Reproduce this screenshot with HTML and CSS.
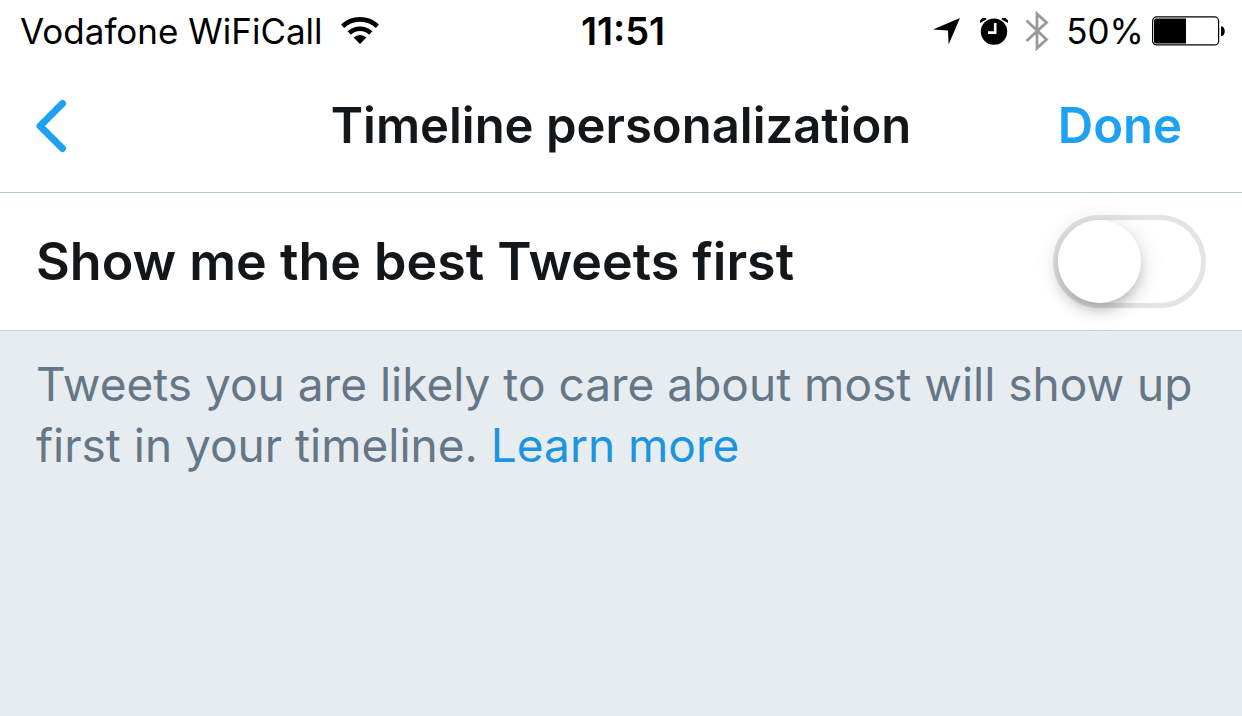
FILE: index.html
```html
<!DOCTYPE html>
<html lang="en">
<head>
<meta charset="utf-8">
<meta name="viewport" content="width=device-width, initial-scale=1">
<title>Timeline personalization</title>
<link rel="stylesheet" href="styles.css">
</head>
<body>
<div class="status">
  <div class="status-left">
    <span>Vodafone WiFiCall</span>
    <svg class="wifi" width="38" height="28" viewBox="0 0 38 28" aria-hidden="true">
      <path d="M1.600 9.200a25.500 25.500 0 0 1 34.800 0" fill="none" stroke="#000" stroke-width="4.600"/>
      <path d="M8.300 16a15.500 15.500 0 0 1 21.400 0" fill="none" stroke="#000" stroke-width="4.600"/>
      <path d="M12.600 20.600a9 9 0 0 1 12.800 0L19 27z"/>
    </svg>
  </div>
  <time class="clock">11:51</time>
  <div class="status-right">
    <svg width="27" height="28" viewBox="0 0 27 28" aria-hidden="true"><path d="M0 12.600 27 1 15.600 27.400 15 13.400z"/></svg>
    <svg class="alarm" width="28" height="28" viewBox="0 0 28 28" aria-hidden="true">
      <circle cx="14" cy="14.600" r="13.200"/>
      <path d="M0 6V3.500L2.500 1h3.200l1 1.200zM28 6V3.500L25.500 1h-3.200l-1 1.200z"/>
      <path d="M15.200 6v9.600H8" fill="none" stroke="#fff" stroke-width="2.600"/>
    </svg>
    <svg class="bluetooth" width="24" height="42" viewBox="0 0 24 42" aria-hidden="true">
      <path d="M1.500 10.500 21.500 29.500 12 38V4l9.500 8.500L1.500 31" fill="none" stroke="#999" stroke-width="2.800"/>
    </svg>
    <span>50%</span>
    <svg class="battery" width="74" height="30" viewBox="0 0 74 30" aria-hidden="true">
      <rect x=".6" y=".9" width="66" height="28" rx="4" fill="none" stroke="#000" stroke-width="1.200"/>
      <path d="M4 2.500h30v25H4a2 2 0 0 1-2-2v-21a2 2 0 0 1 2-2zM69 10.200c5 0 5 10 0 10z"/>
    </svg>
  </div>
</div>
<header class="nav">
  <button class="back" type="button" aria-label="Back">
    <svg width="32" height="54" viewBox="0 0 32 54" aria-hidden="true"><path d="M27.500 4.500 5 27l22.500 22.500" fill="none" stroke="#1da1f2" stroke-width="7" stroke-linecap="round" stroke-linejoin="round"/></svg>
  </button>
  <h1 class="title">Timeline personalization</h1>
  <button class="done" type="button">Done</button>
</header>
<main>
  <div class="setting">
    <label class="label" for="best">Show me the best Tweets first</label>
    <input class="toggle" id="best" type="checkbox" role="switch" aria-describedby="help">
  </div>
  <p class="help" id="help">Tweets you are likely to care about most will show up first in your timeline. <a class="link" href="#learn-more">Learn more</a></p>
</main>
</body>
</html>
```
FILE: styles.css
```css
body {
  margin: 0;
  min-height: 100vh;
  background: #e6ecf0;
  color: #14171a;
  font-family: Inter, "Liberation Sans", sans-serif;
}
.status {
  display: grid;
  grid-template-columns: 1fr auto 1fr;
  align-items: center;
  height: 62px;
  padding: 0 16px 0 20px;
  background: #fff;
  color: #000;
  font-size: 35px;
  line-height: 62px;
  white-space: nowrap;
}
.status-left,
.status-right {
  display: flex;
  align-items: center;
}
.status-left { gap: 18px; }
.status-right { justify-content: flex-end; }
.alarm { margin-left: 20px; }
.bluetooth { margin: 0 17px; }
.battery { margin-left: 8px; }
.clock {
  font-size: 38px;
  font-weight: 600;
}
.nav {
  display: grid;
  grid-template-columns: 1fr auto 1fr;
  align-items: center;
  box-sizing: border-box;
  height: 131px;
  padding: 0 35px 2px;
  border-bottom: 1px solid #b9c5ce;
  background: #fff;
}
.back,
.done {
  border: 0;
  padding: 0;
  background: none;
  font: inherit;
  cursor: pointer;
}
.back {
  display: flex;
  justify-self: start;
}
.title,
.done {
  margin: 0;
  font-size: 49px;
  font-weight: 600;
  line-height: 60px;
}
.done {
  justify-self: end;
  margin-right: 25px;
  color: #1da1f2;
}
.setting {
  display: flex;
  align-items: center;
  justify-content: space-between;
  height: 137px;
  padding: 0 36px;
  border-bottom: 1px solid #c6d2da;
  background: #fff;
}
.label {
  font-size: 52px;
  font-weight: 600;
  line-height: 64px;
}
.toggle {
  appearance: none;
  box-sizing: border-box;
  flex: none;
  width: 153px;
  height: 93px;
  margin: 0;
  border: 5px solid #e4e4e4;
  border-radius: 47px;
  background: #fff;
  cursor: pointer;
}
.toggle::before {
  content: "";
  display: block;
  width: 83px;
  height: 83px;
  border-radius: 50%;
  background: #fff;
  box-shadow: 0 8px 14px -2px rgba(0, 0, 0, .25), 0 2px 32px rgba(0, 0, 0, .1);
}
.toggle:checked {
  border-color: #1da1f2;
  background: #1da1f2;
}
.toggle:checked::before { margin-left: auto; }
.help {
  margin: 0;
  padding: 23px 36px;
  color: #657786;
  font-size: 46px;
  line-height: 61px;
}
.link {
  color: #1b95e0;
  text-decoration: none;
}
```
